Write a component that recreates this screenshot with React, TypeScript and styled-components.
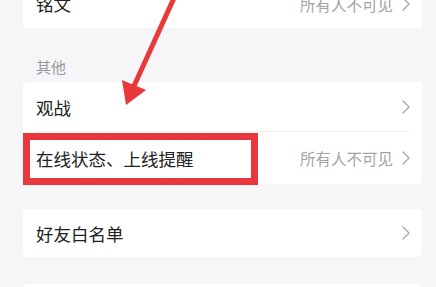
import styled, { createGlobalStyle } from 'styled-components'

const GlobalStyle = createGlobalStyle`
  html, body {
    margin: 0;
    padding: 0;
    background: #f6f6f8;
  }
  body {
    font-family: "Noto Sans CJK SC", "Noto Sans", sans-serif;
    overflow: hidden;
  }
`

const Page = styled.div`
  position: relative;
  width: 436px;
  height: 287px;
  overflow: hidden;
  background: #f6f6f8;
`

const Content = styled.div`
  display: flex;
  flex-direction: column;
  padding: 0 14px 0 23px;
  margin-top: -21px;
`

const Card = styled.div<{ $gap?: number }>`
  background: #ffffff;
  border-radius: 4px;
  margin-top: ${p => p.$gap || 0}px;
  display: flex;
  flex-direction: column;
`

const SectionLabel = styled.div`
  padding: 28px 0 5px 13px;
  font-size: 15px;
  line-height: 21px;
  color: #9a9a9e;
`

const Row = styled.div<{ $h?: number; $divider?: boolean }>`
  height: ${p => p.$h || 49}px;
  display: flex;
  align-items: center;
  padding: 0 12px 0 13px;
  position: relative;
  ${p =>
    p.$divider &&
    `
    &::after {
      content: '';
      position: absolute;
      left: 13px;
      right: 12px;
      bottom: 0;
      height: 1px;
      background: #efeff1;
    }
  `}
`

const Title = styled.span`
  flex: 1;
  font-size: 17.5px;
  color: #222222;
  white-space: nowrap;
`

const Value = styled.span`
  font-size: 15.5px;
  color: #a3a3a6;
  margin-right: 9px;
  white-space: nowrap;
`

const Highlight = styled.div`
  position: absolute;
  left: 23px;
  top: 133px;
  width: 235px;
  height: 52px;
  box-sizing: border-box;
  border: 7px solid #e8383d;
`

const Arrow = styled.svg`
  position: absolute;
  left: 0;
  top: 0;
  pointer-events: none;
`

const Chevron = () => (
  <svg width="8" height="14" viewBox="0 0 8 14">
    <path d="M1 1 L7 7 L1 13" fill="none" stroke="#a8a8ab" strokeWidth="1.4" strokeLinecap="round" strokeLinejoin="round" />
  </svg>
)

export default function App() {
  return (
    <Page>
      <GlobalStyle />
      <Content>
        <Card>
          <Row>
            <Title>铭文</Title>
            <Value>所有人不可见</Value>
            <Chevron />
          </Row>
        </Card>

        <SectionLabel>其他</SectionLabel>
        <Card>
          <Row $divider $h={50}>
            <Title>观战</Title>
            <Chevron />
          </Row>
          <Row $h={52}>
            <Title>在线状态、上线提醒</Title>
            <Value>所有人不可见</Value>
            <Chevron />
          </Row>
        </Card>

        <Card $gap={25}>
          <Row $h={48}>
            <Title>好友白名单</Title>
            <Chevron />
          </Row>
        </Card>

        <Card $gap={27}>
          <Row $h={48} />
        </Card>
      </Content>

      <Highlight />
      <Arrow width="436" height="287" viewBox="0 0 436 287">
        <line x1="174" y1="-2" x2="134" y2="86" stroke="#e83a3a" strokeWidth="5" strokeLinecap="round" />
        <polygon points="126,105 122,80 146,90" fill="#e83a3a" />
      </Arrow>
    </Page>
  )
}
